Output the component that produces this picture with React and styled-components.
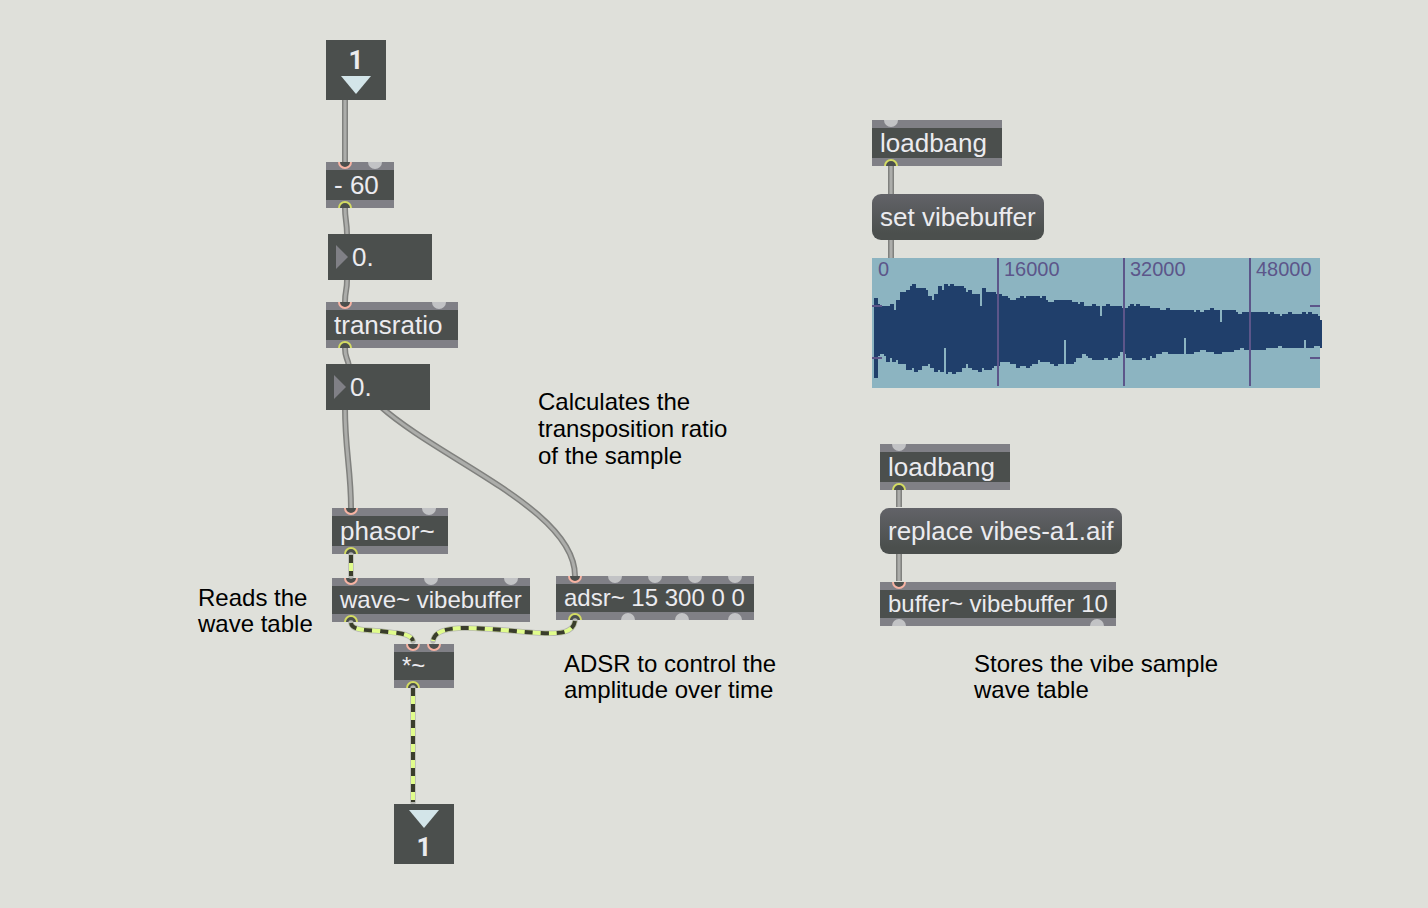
import React from "react";
import styled, { createGlobalStyle, css } from "styled-components";

const GlobalStyle = createGlobalStyle`
  html, body { margin: 0; background: #dfe0da; }
  * { box-sizing: border-box; }
`;

const Patcher = styled.main`
  position: relative;
  min-height: 100vh;
  overflow: hidden;
  background: #dfe0da;
  color: #000;
  font-family: "Liberation Sans", Arial, sans-serif;
`;

/* Everything on the patcher is placed by its own canvas coordinates. */
const placed = css`
  position: absolute;
  left: ${(p) => p.$x}px;
  top: ${(p) => p.$y}px;
`;

const Cables = styled.svg`
  position: absolute;
  inset: 0;
  width: 100%;
  height: 100%;
  overflow: visible;
  pointer-events: none;
`;

const ObjectBox = styled.div`
  ${placed}
  display: flex;
  flex-direction: column;
  width: ${(p) => p.$w}px;
  height: ${(p) => (p.$small ? 44 : 46)}px;
  background: #4b4f4d;
  color: #ebebef;
  font-size: ${(p) => (p.$small ? 24 : 26)}px;
`;

const Rail = styled.div`
  position: relative;
  flex: none;
  height: 8px;
  overflow: hidden;
  background: #808086;
`;

const ObjectText = styled.div`
  flex: 1;
  padding-left: 8px;
  line-height: ${(p) => (p.$small ? 28 : 30)}px;
  white-space: pre;
`;

const hotColor = { in: "#f7b3a3", out: "#d4dc62" };

const Port = styled.i`
  position: absolute;
  left: ${(p) => p.$at - 7}px;
  ${(p) => (p.$side === "in" ? "bottom: 1px;" : "top: 1px;")}
  width: 14px;
  height: 14px;
  border-radius: 50%;
  background: ${(p) => (p.$hot ? "#4b4f4d" : "#c2c3c5")};
  border: ${(p) => (p.$hot ? `2px solid ${hotColor[p.$side]}` : "0")};
`;

const Message = styled.button`
  ${placed}
  height: 46px;
  padding: 0 8px;
  width: ${(p) => p.$w}px;
  border: 0;
  border-radius: 9px;
  background: linear-gradient(#626368, #4b4f4d 85%);
  color: #ebebef;
  font: 26px/46px "Liberation Sans", Arial, sans-serif;
  text-align: left;
  white-space: pre;
`;

const NumberBox = styled.label`
  ${placed}
  display: flex;
  align-items: center;
  gap: 4px;
  width: 104px;
  height: 46px;
  padding-left: 8px;
  background: #4b4f4d;
`;

const NumberInput = styled.input`
  flex: 1;
  min-width: 0;
  height: 46px;
  padding: 0;
  border: 0;
  outline: 0;
  background: transparent;
  color: #ebebef;
  font: 26px/46px "Liberation Sans", Arial, sans-serif;
`;

const PortBox = styled.div`
  ${placed}
  display: flex;
  flex-direction: column;
  align-items: center;
  gap: ${(p) => (p.$outlet ? 6 : 3)}px;
  width: 60px;
  height: 60px;
  padding-top: ${(p) => (p.$outlet ? 6 : 7)}px;
  background: #4b4f4d;
  color: #ebebef;
  font: bold 26px/26px Roboto, Arial, sans-serif;
`;

const Comment = styled.p`
  ${placed}
  margin: 0;
  font-size: 24px;
  line-height: ${(p) => p.$line || 26}px;
  white-space: pre;
`;

const WaveBox = styled.figure`
  ${placed}
  width: 448px;
  height: 130px;
  margin: 0;
  background: #8cb4c1;
`;

const WaveDrawing = styled.svg`
  position: absolute;
  left: 0;
  top: 0;
  overflow: visible;
`;

const Ruler = styled.div`
  position: relative;
  display: grid;
  grid-template-columns: repeat(3, 126px) auto;
  color: #5c568a;
  font-size: 20px;
  line-height: 22px;
`;

const Tick = styled.span`
  padding-left: 6px;
`;

function PatchObject({ x, y, w, small, ins = [], outs = [], hotIns = 1, hotOuts = 1, children }) {
  return (
    <ObjectBox $x={x} $y={y} $w={w} $small={small}>
      <Rail>
        {ins.map((at, i) => (
          <Port key={at} $side="in" $at={at} $hot={i < hotIns} />
        ))}
      </Rail>
      <ObjectText $small={small}>{children}</ObjectText>
      <Rail>
        {outs.map((at, i) => (
          <Port key={at} $side="out" $at={at} $hot={i < hotOuts} />
        ))}
      </Rail>
    </ObjectBox>
  );
}

function FloatBox({ x, y, label }) {
  return (
    <NumberBox $x={x} $y={y}>
      <svg width="12" height="24" aria-hidden="true">
        <path d="M0 0L12 12L0 24Z" fill="#808086" />
      </svg>
      <NumberInput aria-label={label} defaultValue="0." />
    </NumberBox>
  );
}

function PortArrow() {
  return (
    <svg width="30" height="18" aria-hidden="true">
      <path d="M0 0H30L15 18Z" fill="#d3e5e9" />
    </svg>
  );
}

function Control({ d }) {
  return (
    <g fill="none">
      <path d={d} stroke="#80817e" strokeWidth="6" />
      <path d={d} stroke="#acadaa" strokeWidth="3" />
    </g>
  );
}

function Signal({ d }) {
  return (
    <g fill="none">
      <path d={d} stroke="#b5b6b1" strokeWidth="5.5" strokeLinecap="round" />
      <path d={d} stroke="#e0fc8c" strokeWidth="4" />
      <path d={d} stroke="#3a3d2c" strokeWidth="4" strokeDasharray="8 8" />
    </g>
  );
}

/* Sample peaks as [columns, level] runs; one column or level is two pixels. */
const crest = [
  [2,20],[1,23],[5,24],[2,23],[1,26],[2,21],[3,17],[2,16],[1,14],[2,13],[5,15],[1,16],[2,19],[1,21],
  [2,18],[2,14],[1,16],[2,13],[1,14],[2,13],[5,14],[1,15],[1,17],[2,16],[4,18],[1,24],[2,15],[5,17],
  [3,18],[3,19],[1,20],[3,21],[2,20],[2,19],[1,20],[7,19],[1,20],[2,19],[1,21],[3,22],[9,21],[3,22],
  [1,23],[2,22],[4,24],[2,23],[2,24],[1,29],[2,24],[2,23],[6,24],[3,25],[1,24],[2,23],[1,24],[2,23],
  [5,24],[5,25],[3,26],[2,25],[4,26],[8,26],[1,27],[2,26],[2,27],[3,26],[2,25],[3,26],[1,32],[7,26],
  [1,27],[2,28],[13,27],[1,28],[2,27],[3,28],[1,29],[3,28],[2,27],[5,28],[2,27],[1,28],[2,27],[3,28],
  [1,29],[1,31],
];
const trough = [
  [2,60],[1,49],[2,48],[1,49],[2,52],[1,50],[2,52],[1,51],[4,53],[3,56],[1,55],[2,57],[2,56],[3,54],
  [1,53],[2,55],[2,57],[1,56],[2,57],[1,45],[1,58],[2,57],[2,58],[3,57],[2,55],[1,53],[2,55],[3,56],
  [2,57],[1,55],[4,56],[1,55],[3,54],[5,52],[3,53],[2,55],[2,54],[1,54],[2,55],[1,54],[3,53],[1,51],
  [5,52],[2,53],[2,54],[3,53],[1,41],[4,53],[1,52],[3,50],[2,48],[1,49],[2,50],[6,51],[2,50],[2,51],
  [3,50],[1,49],[2,47],[1,48],[3,50],[5,51],[2,50],[2,51],[1,49],[2,50],[3,48],[3,47],[5,48],[3,48],
  [1,40],[4,48],[3,47],[3,46],[4,47],[4,48],[6,47],[3,46],[2,45],[11,46],[6,45],[2,44],[11,45],[1,41],
  [4,45],[3,44],[1,45],
];

function outline(top, bottom) {
  const trace = (runs) => {
    let x = 2;
    return runs.flatMap(([n, level]) => {
      const from = x;
      x += n * 2;
      return [[from, level * 2], [x, level * 2]];
    });
  };
  const points = [...trace(top), ...trace(bottom).reverse()];
  return points.map((p) => p.join(",")).join(" ");
}

function Waveform({ x, y }) {
  return (
    <WaveBox $x={x} $y={y} aria-label="vibebuffer waveform">
      <WaveDrawing width="448" height="130" aria-hidden="true">
        <polygon points={outline(crest, trough)} fill="#203f6b" shapeRendering="crispEdges" />
        <path
          d="M126 0V128M252 0V128M378 0V128M0 48H10M0 100H10M438 48H448M438 100H448"
          stroke="#5c568a"
          strokeWidth="2"
        />
      </WaveDrawing>
      <Ruler>
        <Tick>0</Tick>
        <Tick>16000</Tick>
        <Tick>32000</Tick>
        <Tick>48000</Tick>
      </Ruler>
    </WaveBox>
  );
}

export default function App() {
  return (
    <>
      <GlobalStyle />
      <Patcher>
        <PortBox $x={326} $y={40}>
          <span>1</span>
          <PortArrow />
        </PortBox>
        <PatchObject x={326} y={162} w={68} ins={[19, 49]} outs={[19]}>- 60</PatchObject>
        <PatchObject x={326} y={302} w={132} ins={[19, 113]} outs={[19]}>transratio</PatchObject>
        <PatchObject x={332} y={508} w={116} ins={[19, 97]} outs={[19]}>phasor~</PatchObject>
        <PatchObject x={332} y={578} w={198} small ins={[19, 99, 179]} outs={[19]}>wave~ vibebuffer</PatchObject>
        <PatchObject x={556} y={576} w={198} small ins={[19, 59, 99, 139, 179]} outs={[19, 72, 126, 179]}>adsr~ 15 300 0 0</PatchObject>
        <PatchObject x={394} y={644} w={60} small hotIns={2} ins={[19, 40]} outs={[19]}>*~</PatchObject>
        <PatchObject x={872} y={120} w={130} hotIns={0} ins={[19]} outs={[19]}>loadbang</PatchObject>
        <PatchObject x={880} y={444} w={130} hotIns={0} ins={[19]} outs={[19]}>loadbang</PatchObject>
        <PatchObject x={880} y={582} w={236} small hotOuts={0} ins={[19]} outs={[19, 217]}>buffer~ vibebuffer 10</PatchObject>

        <Cables aria-hidden="true">
          <Control d="M345 100V162" />
          <Control d="M345 208C345 220 347 222 347 234" />
          <Control d="M347 280C347 292 345 290 345 302" />
          <Control d="M345 348C345 358 347 356 349 366" />
          <Control d="M345 408C345 450 351 470 351 508" />
          <Control d="M380 406C440 460 575 510 575 576" />
          <Control d="M891 166V194" />
          <Control d="M891 240V258" />
          <Control d="M899 490V507" />
          <Control d="M899 554V581" />
          <Signal d="M351 555V576" />
          <Signal d="M351 623C352 630 364 630 380 631C396 633 411 633 413 641" />
          <Signal d="M575 621C573 633 560 634 540 633C520 632 490 628 465 628C445 628 434 632 433 641" />
          <Signal d="M413 688V802" />
        </Cables>

        <FloatBox x={328} y={234} label="Semitones" />
        <FloatBox x={326} y={364} label="Transposition ratio" />
        <Message $x={872} $y={194} $w={172}>set vibebuffer</Message>
        <Message $x={880} $y={508} $w={242}>replace vibes-a1.aif</Message>
        <Waveform x={872} y={258} />
        <PortBox $x={394} $y={804} $outlet>
          <PortArrow />
          <span>1</span>
        </PortBox>

        <Comment $x={538} $y={388} $line={27}>{"Calculates the\ntransposition ratio\nof the sample"}</Comment>
        <Comment $x={198} $y={585}>{"Reads the\nwave table"}</Comment>
        <Comment $x={564} $y={651}>{"ADSR to control the\namplitude over time"}</Comment>
        <Comment $x={974} $y={651}>{"Stores the vibe sample\nwave table"}</Comment>
      </Patcher>
    </>
  );
}
